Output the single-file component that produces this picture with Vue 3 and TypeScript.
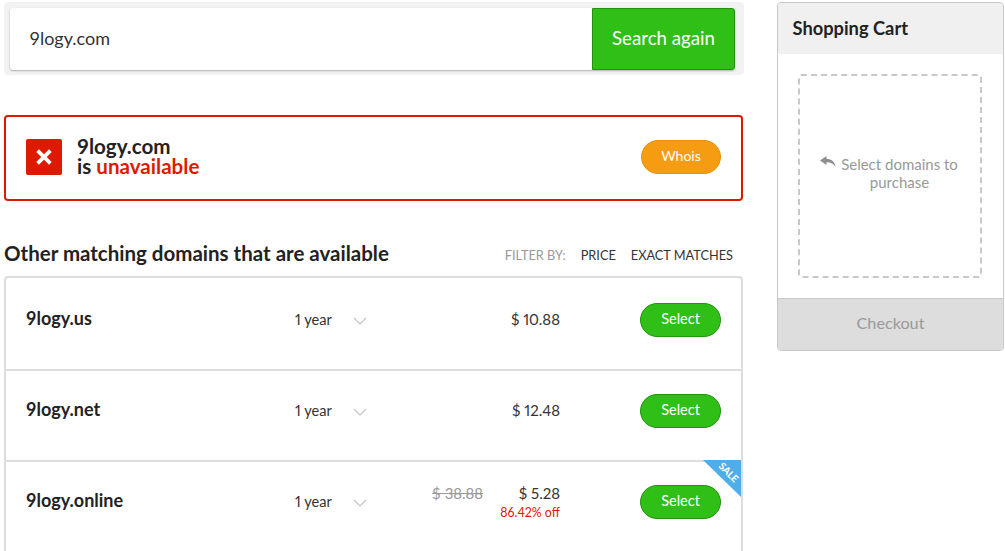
<script setup lang="ts">
interface Row { name: string; price: string; old?: string; off?: string; sale?: boolean }
const rows: Row[] = [
  { name: '9logy.us', price: '$ 10.88' },
  { name: '9logy.net', price: '$ 12.48' },
  { name: '9logy.online', price: '$ 5.28', old: '$ 38.88', off: '86.42% off', sale: true },
]
</script>

<template>
  <div class="page">
    <main class="main">
      <div class="search">
        <div class="search-inner">
          <div class="query">9logy.com</div>
          <div class="search-btn">Search again</div>
        </div>
      </div>

      <section class="alert">
        <div class="x-icon">
          <svg width="18" height="18" viewBox="0 0 18 18"><path d="M2.6 2.6 L15.4 15.4 M15.4 2.6 L2.6 15.4" stroke="#fff" stroke-width="3.8" /></svg>
        </div>
        <div class="alert-text">
          <div>9logy.com</div>
          <div>is <span class="red">unavailable</span></div>
        </div>
        <div class="whois">Whois</div>
      </section>

      <div class="head">
        <h2>Other matching domains that are available</h2>
        <div class="filters">
          <span class="f-label">FILTER BY:</span>
          <span>PRICE</span>
          <span>EXACT MATCHES</span>
        </div>
      </div>

      <div class="list">
        <div v-for="r in rows" :key="r.name" class="row">
          <div class="name">{{ r.name }}</div>
          <div class="term">
            <span>1 year</span>
            <svg width="14" height="8" viewBox="0 0 14 8"><path d="M1 1 L7 7 L13 1" fill="none" stroke="#c4c4c4" stroke-width="1.2" /></svg>
          </div>
          <div class="old" :class="{ raised: r.off }">{{ r.old }}</div>
          <div class="price" :class="{ raised: r.off }">
            <div>{{ r.price }}</div>
            <div v-if="r.off" class="off">{{ r.off }}</div>
          </div>
          <div class="select">Select</div>
          <div v-if="r.sale" class="ribbon"><span>SALE</span></div>
        </div>
      </div>
    </main>

    <aside class="cart">
      <div class="cart-head">Shopping Cart</div>
      <div class="cart-body">
        <div class="drop">
          <svg class="reply" width="16" height="11" viewBox="0 0 16 11"><path d="M6.5 0 L0 4.6 L6.5 9 V6.2 C10.5 6 13.5 7.6 15.5 10.8 C15 6 11.5 3 6.5 2.8 Z" fill="#8e8e8e" /></svg>
          <div class="drop-text">Select domains to<br />purchase</div>
        </div>
      </div>
      <div class="checkout">Checkout</div>
    </aside>
  </div>
</template>

<style>
html, body { margin: 0; overflow: hidden; background: #fff; }
</style>

<style scoped>
.page {
  width: 1005px;
  height: 551px;
  overflow: hidden;
  display: flex;
  align-items: flex-start;
  gap: 33px;
  padding: 2px 0 0 4px;
  box-sizing: border-box;
  font-family: Lato, "Liberation Sans", sans-serif;
  color: #222;
}
.main { width: 740px; flex: none; }

.search {
  height: 73px;
  box-sizing: border-box;
  padding: 6px 9px 5px 6px;
  background: #f2f2f2;
  border-radius: 4px;
}
.search-inner {
  height: 62px;
  display: flex;
  background: #fff;
  border-radius: 3px;
  box-shadow: 0 1px 2px rgba(0, 0, 0, .28);
}
.query {
  flex: 1;
  padding-left: 19.5px;
  line-height: 60px;
  font-size: 18px;
  color: #333;
}
.search-btn {
  width: 143px;
  box-sizing: border-box;
  border: 1px solid #24920f;
  border-radius: 0 3px 3px 0;
  background: #2fbf17;
  color: #fff;
  text-align: center;
  line-height: 59px;
  font-size: 18.7px;
}

.alert {
  margin-top: 40px;
  width: 739px;
  height: 86px;
  box-sizing: border-box;
  border: 2px solid #dd1a00;
  border-radius: 4px;
  display: flex;
  align-items: center;
  padding: 0 20px 0 20px;
}
.x-icon {
  width: 36px;
  height: 36px;
  flex: none;
  margin-top: -2px;
  background: #dd1a00;
  border-radius: 2px;
  display: flex;
  align-items: center;
  justify-content: center;
}
.alert-text {
  margin: -4px 0 0 15px;
  flex: 1;
  font-size: 20.6px;
  line-height: 20px;
  font-weight: 700;
  color: #222;
}
.red { color: #dd1a00; }
.whois {
  width: 80px;
  height: 34px;
  margin-top: -2px;
  border-radius: 17px;
  background: #f59c12;
  border: 1px solid #e8920e;
  box-sizing: border-box;
  color: #fff;
  text-align: center;
  font-size: 14px;
  line-height: 30px;
}

.head {
  margin-top: 39px;
  height: 36px;
  display: flex;
  align-items: flex-start;
  justify-content: space-between;
}
h2 {
  margin: 0;
  font-size: 20.5px;
  line-height: 26px;
  font-weight: 700;
  color: #222;
}
.filters {
  display: flex;
  gap: 15px;
  padding: 7px 11px 0 0;
  font-size: 12.75px;
  line-height: 16px;
  color: #333;
}
.f-label { color: #999; }

.list {
  width: 739px;
  height: 300px;
  box-sizing: border-box;
  border: 2px solid #ddd;
  border-bottom: 0;
  border-radius: 4px 4px 0 0;
}
.row {
  position: relative;
  height: 91px;
  box-sizing: border-box;
  border-top: 2px solid #ddd;
  display: flex;
  align-items: flex-start;
  padding-left: 20px;
}
.row:first-child { border-top-color: transparent; }
.name {
  width: 269px;
  margin-top: 27px;
  font-size: 18px;
  line-height: 22px;
  font-weight: 700;
  color: #222;
}
.term {
  width: 120px;
  margin-top: 31px;
  display: flex;
  align-items: center;
  gap: 21px;
  font-size: 14.6px;
  line-height: 18px;
  color: #333;
  font-variant-numeric: proportional-nums;
}
.term svg { margin-top: 2px; }
.old {
  width: 68px;
  margin-top: 30px;
  text-align: right;
  font-size: 15px;
  line-height: 18px;
  color: #999;
  text-decoration: line-through;
}
.price {
  width: 77px;
  margin-top: 30px;
  text-align: right;
  font-size: 15px;
  line-height: 18px;
  color: #333;
  font-variant-numeric: proportional-nums;
}
.raised { margin-top: 22px; }
.off {
  font-size: 12.4px;
  line-height: 22px;
  color: #dd1a00;
}
.select {
  margin: 23px 0 0 80px;
  width: 81px;
  height: 34px;
  box-sizing: border-box;
  border-radius: 17px;
  border: 1px solid #24920f;
  background: #2fbf17;
  color: #fff;
  text-align: center;
  font-size: 14.5px;
  line-height: 30px;
}
.ribbon {
  position: absolute;
  top: -2px;
  right: 0;
  width: 38px;
  height: 37px;
  background: #4eaeea;
  clip-path: polygon(0 0, 100% 0, 100% 100%);
}
.ribbon span {
  position: absolute;
  top: 7px;
  left: 14px;
  font-size: 10px;
  line-height: 11px;
  font-weight: 700;
  color: #fff;
  transform: rotate(45deg);
}

.cart {
  width: 227px;
  height: 349px;
  flex: none;
  box-sizing: border-box;
  border: 1px solid #c8c8c8;
  border-radius: 4px;
  display: flex;
  flex-direction: column;
  overflow: hidden;
}
.cart-head {
  height: 51px;
  flex: none;
  background: #f0f0f0;
  padding-left: 14.5px;
  font-size: 18.3px;
  line-height: 50px;
  font-weight: 700;
  color: #222;
}
.cart-body {
  flex: 1;
  padding: 20px 21px 20px 20px;
}
.drop {
  height: 100%;
  box-sizing: border-box;
  border: 2px dashed #c8c8c8;
  border-radius: 3px;
  display: flex;
  align-items: center;
  justify-content: center;
  gap: 5px;
  padding-right: 2px;
}
.drop-text {
  margin-top: -6px;
  text-align: center;
  font-size: 15px;
  line-height: 18px;
  color: #999;
}
.reply { margin-top: -30px; }
.checkout {
  height: 52px;
  flex: none;
  box-sizing: border-box;
  border-top: 1px solid #c8c8c8;
  background: #ddd;
  text-align: center;
  font-size: 16.2px;
  line-height: 48px;
  color: #999;
}
</style>
